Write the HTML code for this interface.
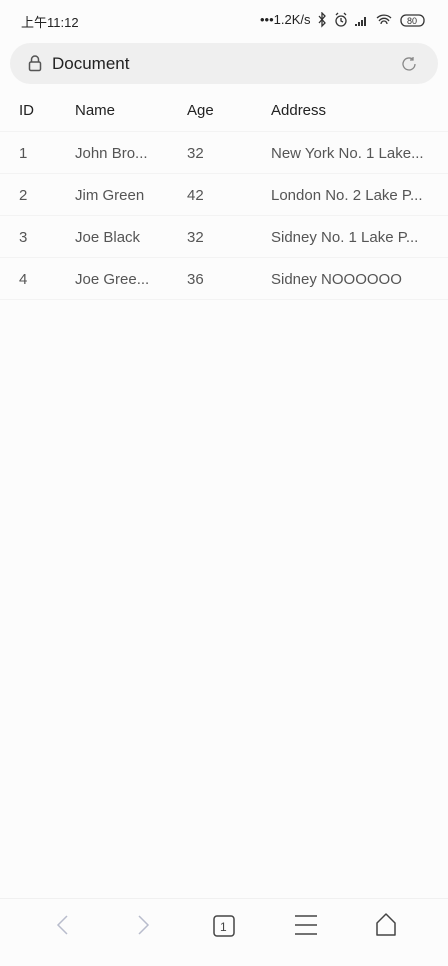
<!DOCTYPE html>
<html><head><meta charset="utf-8"><style>
*{margin:0;padding:0;box-sizing:border-box}
body{width:448px;height:960px;background:#fcfcfc;font-family:"Liberation Sans","Noto Sans CJK SC",sans-serif;position:relative;overflow:hidden}
.sb{position:absolute;top:0;left:0;width:448px;height:40px;font-size:13px;color:#222}
.addr{position:absolute;left:10px;top:43px;width:428px;height:41px;border-radius:21px;background:#efefef}
.addr .t{position:absolute;left:42px;top:11px;font-size:17px;color:#222}
table{position:absolute;top:89px;left:0;width:448px;border-collapse:collapse;font-size:15px}
tr{height:42px;border-bottom:1px solid #f3f3f3}
td{padding:2px 0 0;color:#555;white-space:nowrap}
th{text-align:left;font-weight:normal;color:#222;padding:2px 0 0}
.c1{padding-left:19px;width:75px}.c2{width:112px}.c3{width:84px}
.nav{position:absolute;top:898px;left:0;width:448px;height:62px;border-top:1px solid #f0f0f0}
</style></head><body>
<div class="sb">
<span style="position:absolute;left:21px;top:12px">上午11:12</span>
<span style="position:absolute;left:260px;top:12px">•••1.2K/s</span>
<svg style="position:absolute;left:318px;top:12px" width="120" height="16" viewBox="0 0 120 16" fill="none" stroke="#333" stroke-width="1.3">
<path d="M1 4l6 7-3 3V1l3 3-6 7"/>
<circle cx="23" cy="9" r="5"/><path d="M23 6v3l2 1M18 3l2-2M28 3l-2-2"/>
<path d="M38 14v-2M41 14v-4M44 14v-6M47 14V5" stroke-width="2"/>
<path d="M59 6a10 10 0 0 1 14 0M61 9a6 6 0 0 1 10 0M63 12a3 3 0 0 1 6 0"/>
<rect x="83" y="3" width="23" height="11" rx="5"/>
<text x="89" y="12" font-size="9" fill="#333" stroke="none" font-family="Liberation Sans">80</text>
</svg>
</div>
<div class="addr">
<svg style="position:absolute;left:18px;top:12px" width="14" height="17" viewBox="0 0 14 17" fill="none" stroke="#555" stroke-width="1.5"><path d="M3.5 7V4.5a3.5 3.5 0 0 1 7 0V7"/><rect x="1.5" y="7" width="11" height="8.5" rx="1.5"/></svg>
<span class="t">Document</span>
<svg style="position:absolute;left:390px;top:12px" width="18" height="18" viewBox="0 0 18 18" fill="none" stroke="#888" stroke-width="1.3"><path d="M15 9a6 6 0 1 1-2-4.5M13 2v3h-3"/></svg>
</div>
<table>
<tr><th class="c1">ID</th><th class="c2">Name</th><th class="c3">Age</th><th>Address</th></tr>
<tr><td class="c1">1</td><td>John Bro...</td><td>32</td><td>New York No. 1 Lake...</td></tr>
<tr><td class="c1">2</td><td>Jim Green</td><td>42</td><td>London No. 2 Lake P...</td></tr>
<tr><td class="c1">3</td><td>Joe Black</td><td>32</td><td>Sidney No. 1 Lake P...</td></tr>
<tr><td class="c1">4</td><td>Joe Gree...</td><td>36</td><td>Sidney NOOOOOO</td></tr>
</table>
<div class="nav">
<svg width="448" height="62" viewBox="0 0 448 62" fill="none" stroke-width="1.5">
<path d="M67 17l-9 9 9 9" stroke="#b8bccc"/>
<path d="M139 17l9 9-9 9" stroke="#b8bccc"/>
<rect x="214" y="17" width="20" height="20" rx="3" stroke="#444"/>
<text x="220" y="32" font-size="12" fill="#444" stroke="none" font-family="Liberation Sans">1</text>
<path d="M295 17h22M295 26h22M295 35h22" stroke="#444"/>
<path d="M377 36V24l9-9 9 9v12z" stroke="#444" stroke-linejoin="round"/>
</svg>
</div>
</body></html>
